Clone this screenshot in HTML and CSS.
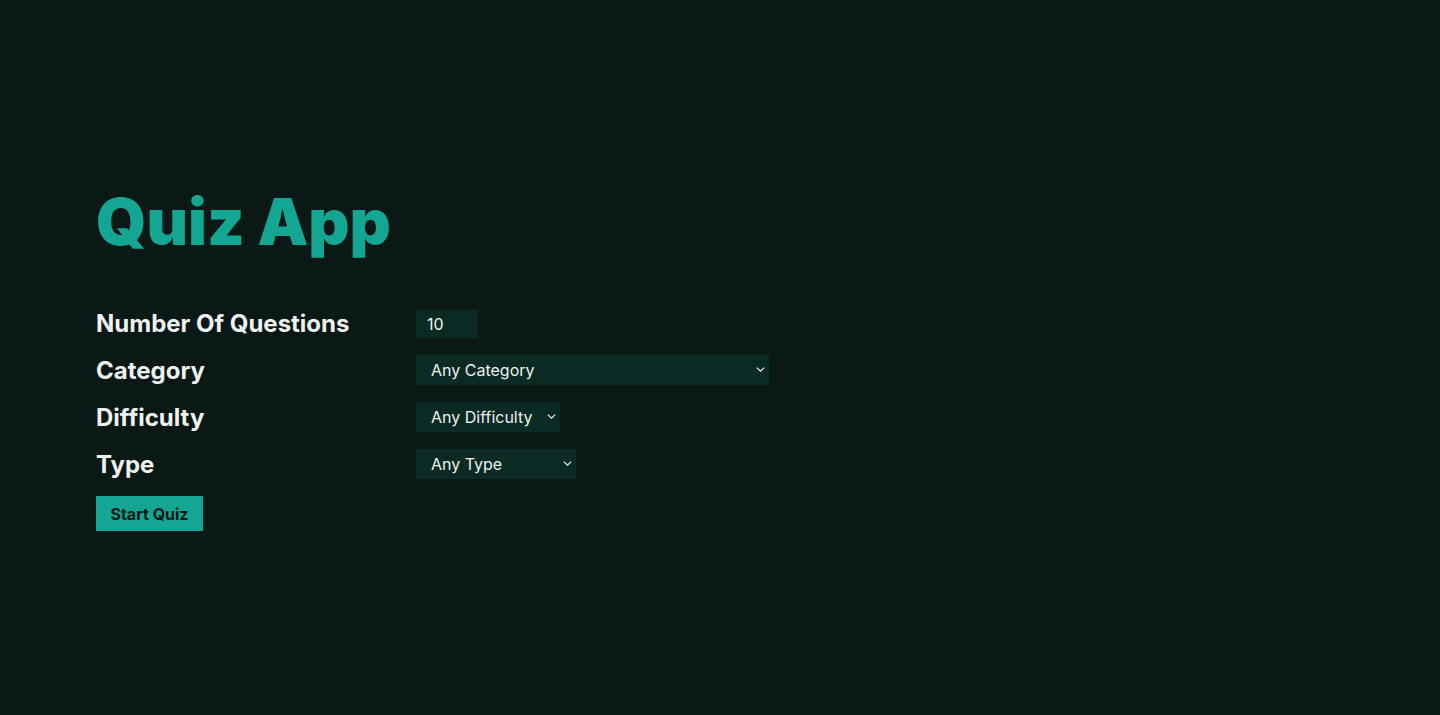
FILE: index.html
```html
<!DOCTYPE html>
<html lang="en">
<head>
<meta charset="utf-8">
<title>Quiz App</title>
<link rel="stylesheet" href="styles.css">
</head>
<body>
<main class="app">
  <h1 class="title">Quiz App</h1>
  <form class="settings">
    <label class="label" for="amount">Number Of Questions</label>
    <div class="field"><input id="amount" class="input" type="number" value="10"></div>

    <label class="label" for="category">Category</label>
    <div class="field">
      <span class="select-wrap select-category">
        <select id="category" class="select">
          <option>Any Category</option>
          <option>General Knowledge</option>
          <option>Entertainment: Japanese Anime &amp; Manga</option>
        </select>
        <svg class="chevron" viewBox="0 0 9 5" width="9" height="5"><path d="M0.8 0.6 L4.5 4.2 L8.2 0.6" fill="none" stroke="#e8efec" stroke-width="1.2"/></svg>
      </span>
    </div>

    <label class="label" for="difficulty">Difficulty</label>
    <div class="field">
      <span class="select-wrap select-difficulty">
        <select id="difficulty" class="select">
          <option>Any Difficulty</option>
          <option>Easy</option>
          <option>Medium</option>
          <option>Hard</option>
        </select>
        <svg class="chevron" viewBox="0 0 9 5" width="9" height="5"><path d="M0.8 0.6 L4.5 4.2 L8.2 0.6" fill="none" stroke="#e8efec" stroke-width="1.2"/></svg>
      </span>
    </div>

    <label class="label" for="type">Type</label>
    <div class="field">
      <span class="select-wrap select-type">
        <select id="type" class="select">
          <option>Any Type</option>
          <option>Multiple Choice</option>
          <option>True / False</option>
        </select>
        <svg class="chevron" viewBox="0 0 9 5" width="9" height="5"><path d="M0.8 0.6 L4.5 4.2 L8.2 0.6" fill="none" stroke="#e8efec" stroke-width="1.2"/></svg>
      </span>
    </div>

    <div class="actions"><button type="button" class="btn">Start Quiz</button></div>
  </form>
</main>
</body>
</html>
```

FILE: styles.css
```css
* { box-sizing: border-box; }
html, body {
  margin: 0;
  height: 100%;
  background: #0a1816;
}
body {
  font-family: Inter, "Noto Sans", sans-serif;
  color: #eef2f0;
}
.app {
  padding: 190px 96px 0;
}
.title {
  margin: 0 0 55px;
  font-size: 64px;
  line-height: 64px;
  font-weight: 900;
  color: #13a692;
  letter-spacing: 0;
}
.settings {
  display: grid;
  grid-template-columns: 320px auto;
  row-gap: 17px;
  align-items: center;
}
.label {
  font-size: 24px;
  font-weight: 700;
  line-height: 29px;
  color: #eef2f0;
}
.field {
  display: flex;
  align-items: center;
}
.input {
  appearance: none;
  -moz-appearance: textfield;
  width: 62px;
  height: 28px;
  border: 0;
  outline: 0;
  background: #0b2a23;
  color: #eef2f0;
  font-family: Inter, sans-serif;
  font-size: 16px;
  padding: 0 11px;
}
.input::-webkit-outer-spin-button,
.input::-webkit-inner-spin-button {
  -webkit-appearance: none;
  margin: 0;
}
.select-wrap {
  position: relative;
  display: inline-block;
}
.select {
  appearance: none;
  -webkit-appearance: none;
  height: 30px;
  width: 100%;
  border: 0;
  outline: 0;
  border-radius: 0;
  background: #0b2a23;
  color: #eef2f0;
  font-family: Inter, sans-serif;
  font-size: 16px;
  padding: 0 24px 0 15px;
}
.select-category { width: 353px; }
.select-difficulty { width: 144px; }
.select-type { width: 160px; }
.chevron {
  position: absolute;
  right: 4px;
  top: 12px;
  pointer-events: none;
}
.actions {
  grid-column: 1 / -1;
}
.btn {
  height: 35px;
  width: 107px;
  border: 0;
  border-radius: 0;
  background: #13a692;
  color: #0a1816;
  font-family: Inter, sans-serif;
  font-weight: 700;
  font-size: 16px;
  padding: 0;
  cursor: pointer;
}
```
